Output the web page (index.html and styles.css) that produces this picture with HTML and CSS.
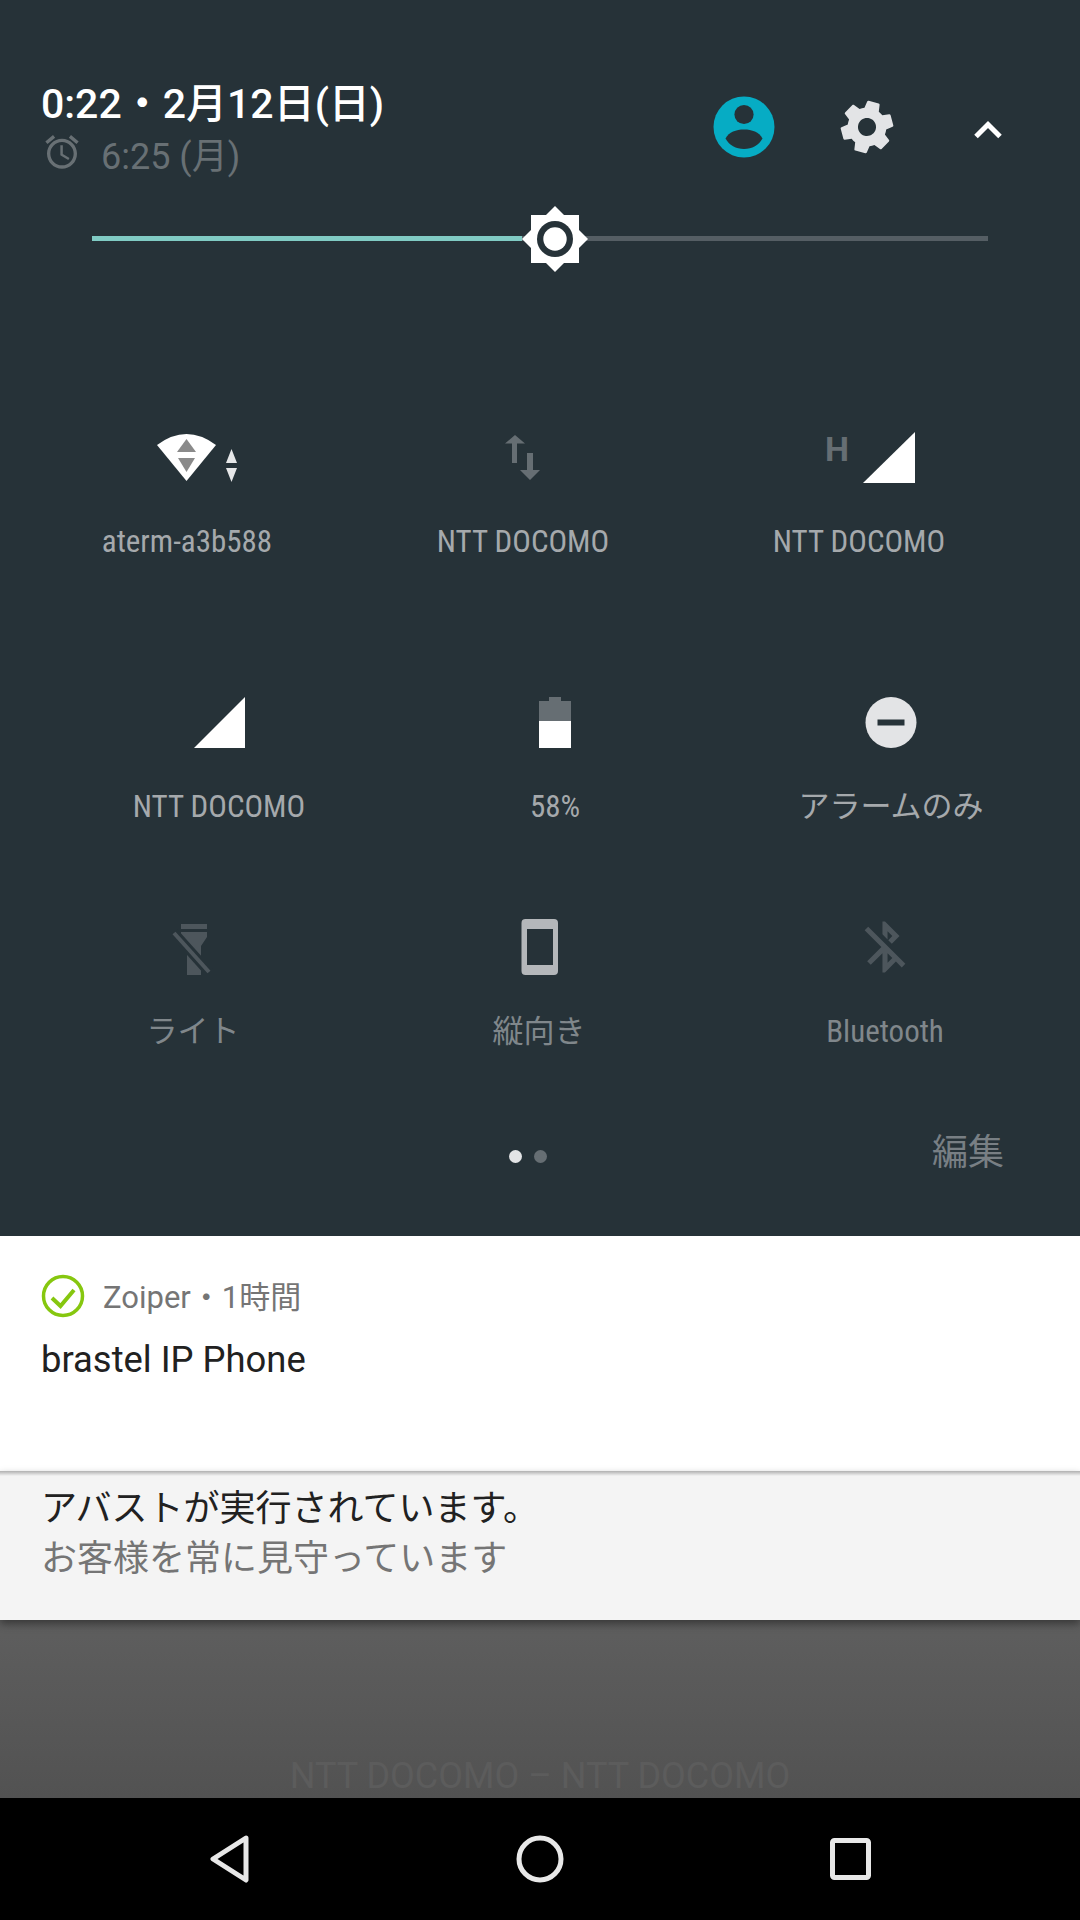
FILE: index.html
```html
<!DOCTYPE html>
<html lang="ja">
<head>
  <meta charset="UTF-8" />
  <title>Quick Settings</title>
  <link rel="stylesheet" href="styles.css">
</head>
<body>
  <section class="panel">
    <!-- Header -->
    <div class="header">
      <div class="clock">
        <div class="date">0:22・2月12日(日)</div>
        <div class="alarm">
          <svg class="alarm-icon" viewBox="0 0 24 24"><path d="M22 5.72l-4.6-3.86-1.29 1.53 4.6 3.86L22 5.72zM7.88 3.39L6.6 1.86 2 5.71l1.29 1.53 4.59-3.85zM12.5 8H11v6l4.75 2.85.75-1.23-4-2.37V8zM12 4c-4.97 0-9 4.03-9 9s4.02 9 9 9c4.97 0 9-4.03 9-9s-4.03-9-9-9zm0 16c-3.87 0-7-3.13-7-7s3.13-7 7-7 7 3.13 7 7-3.13 7-7 7z"/></svg>
          <span>6:25 (月)</span>
        </div>
      </div>
      <div class="header-icons">
        <svg class="user" viewBox="0 0 64 64">
          <circle cx="32" cy="32" r="30.500" fill="#06acc4"/>
          <circle cx="32" cy="19.500" r="9.600" fill="#263238"/>
          <path d="M13.500 43.500C17 37 24 34.500 32 34.500s15 2.500 18.500 9C47 50 40 54 32 54s-15-4-18.500-10.500z" fill="#263238"/>
        </svg>
        <svg class="gear" viewBox="0 0 24 24"><path transform="rotate(15 12 12)" d="M19.43 12.98c.04-.32.07-.64.07-.98s-.03-.66-.07-.98l2.11-1.65c.19-.15.24-.42.12-.64l-2-3.46c-.12-.22-.39-.3-.61-.22l-2.49 1c-.52-.4-1.08-.73-1.69-.98l-.38-2.65C14.46 2.18 14.25 2 14 2h-4c-.25 0-.46.18-.49.42l-.38 2.65c-.61.25-1.17.59-1.69.98l-2.49-1c-.23-.09-.49 0-.61.22l-2 3.46c-.13.22-.07.49.12.64l2.11 1.65c-.04.32-.07.65-.07.98s.03.66.07.98l-2.11 1.65c-.19.15-.24.42-.12.64l2 3.46c.12.22.39.3.61.22l2.49-1c.52.4 1.08.73 1.69.98l.38 2.65c.03.24.24.42.49.42h4c.25 0 .46-.18.49-.42l.38-2.65c.61-.25 1.17-.59 1.69-.98l2.49 1c.23.09.49 0 .61-.22l2-3.46c.12-.22.07-.49-.12-.64l-2.11-1.65zM12 15.5c-1.93 0-3.5-1.57-3.5-3.5s1.57-3.5 3.5-3.5 3.5 1.57 3.5 3.5-1.57 3.5-3.5 3.5z"/></svg>
        <svg class="chevron" viewBox="0 0 36 36"><path d="M6 24.500L18 12.500l12 12" fill="none" stroke="#fff" stroke-width="5"/></svg>
      </div>
    </div>

    <!-- Brightness -->
    <div class="slider">
      <div class="slider-fill"></div>
      <div class="slider-rest"></div>
      <svg class="slider-thumb" viewBox="0 0 70 70">
        <rect x="11" y="11" width="48" height="48" fill="#fff"/>
        <polygon points="35,2 68,35 35,68 2,35" fill="#fff"/>
        <circle cx="35" cy="35" r="18" fill="#263238"/>
        <circle cx="35" cy="35" r="11.700" fill="#fff"/>
      </svg>
    </div>

    <!-- Tiles -->
    <div class="tiles tiles-first">
      <div class="tile">
        <svg class="tile-icon wide" viewBox="0 0 108 56">
          <path d="M53.500 52L24 16Q53.500-6 83 16z" fill="#fff"/>
          <path d="M53.500 10l9.500 13H44z" fill="#8a8a8a"/>
          <path d="M45 29h17l-8.500 14z" fill="#8a8a8a"/>
          <path d="M98.500 20l5.500 14H93zM93 39h11l-5.500 14z" fill="#e6e7e8"/>
        </svg>
        <div class="tile-label">aterm-a3b588</div>
      </div>
      <div class="tile">
        <svg class="tile-icon" viewBox="0 0 56 56"><path d="M20 6l10 8.500h-8V34h-5V14.500H10zM32 24h6v17h7L35 51 25 41h7z" fill="#666e73"/></svg>
        <div class="tile-label">NTT DOCOMO</div>
      </div>
      <div class="tile">
        <svg class="tile-icon wide" viewBox="0 0 112 56">
          <text class="net-type" x="22" y="32">H</text>
          <path d="M60 54h52V3z" fill="#fff"/>
        </svg>
        <div class="tile-label">NTT DOCOMO</div>
      </div>
    </div>

    <div class="tiles tiles-second">
      <div class="tile">
        <svg class="tile-icon" viewBox="0 0 56 56"><path d="M3 54h51V3z" fill="#fff"/></svg>
        <div class="tile-label">NTT DOCOMO</div>
      </div>
      <div class="tile">
        <svg class="tile-icon" viewBox="0 0 56 56">
          <path d="M22 3h12v4h10v20H12V7h10z" fill="#666e73"/>
          <rect x="12" y="27" width="32" height="27" fill="#fff"/>
        </svg>
        <div class="tile-label">58%</div>
      </div>
      <div class="tile">
        <svg class="tile-icon" viewBox="0 0 56 56">
          <circle cx="28" cy="28.500" r="25.500" fill="#e3e4e6"/>
          <rect x="14.500" y="25.500" width="27" height="6" fill="#263238"/>
        </svg>
        <div class="tile-label">アラームのみ</div>
      </div>
    </div>

    <div class="tiles tiles-third">
      <div class="tile off">
        <svg class="tile-icon" viewBox="0 0 56 56">
          <path d="M16 5h26v5H16zM16 13h26v5l-6 9v29H22V27l-6-9z" fill="#4d565c"/>
          <path d="M9 14l35 39" stroke="#263238" stroke-width="10"/>
          <path d="M9 14l35 39" stroke="#4d565c" stroke-width="4"/>
        </svg>
        <div class="tile-label">ライト</div>
      </div>
      <div class="tile off">
        <svg class="tile-icon" viewBox="0 0 56 56"><path fill-rule="evenodd" d="M14.500 0h28.500a4 4 0 0 1 4 4v48a4 4 0 0 1-4 4H14.500a4 4 0 0 1-4-4V4a4 4 0 0 1 4-4zM16 10v36h26V10z" fill="#b4b7ba"/></svg>
        <div class="tile-label">縦向き</div>
      </div>
      <div class="tile off">
        <svg class="tile-icon" viewBox="1 1 22 22"><path d="M13 5.830l1.880 1.880-1.600 1.600 1.410 1.410 3.020-3.020L12 2h-1v5.030l2 2v-3.200zM5.410 4L4 5.410 10.590 12 5 17.590 6.410 19 11 14.410V22h1l4.290-4.290 2.300 2.300L20 18.590 5.410 4zM13 18.170v-3.760l1.880 1.880L13 18.170z" fill="#4d565c"/></svg>
        <div class="tile-label">Bluetooth</div>
      </div>
    </div>

    <div class="panel-footer">
      <div class="dots"><span class="dot on"></span><span class="dot"></span></div>
      <div class="edit">編集</div>
    </div>
  </section>

  <!-- Notifications -->
  <section class="card card-zoiper">
    <div class="card-meta">
      <svg class="check" viewBox="0 0 44 44">
        <circle cx="22" cy="22" r="19.500" fill="none" stroke="#86c70f" stroke-width="3.500"/>
        <path d="M11 24l8.500 8L33 16" fill="none" stroke="#86c70f" stroke-width="4"/>
      </svg>
      <span class="card-app">Zoiper・1時間</span>
    </div>
    <div class="card-title">brastel IP Phone</div>
  </section>
  <section class="card card-avast">
    <div class="avast-title">アバストが実行されています。</div>
    <div class="avast-text">お客様を常に見守っています</div>
  </section>

  <div class="carrier"><span class="carrier-text">NTT DOCOMO – NTT DOCOMO</span></div>

  <nav class="nav">
    <svg viewBox="0 0 60 60"><path d="M46 9L13 30l33 21z" fill="none" stroke="#e8e8e8" stroke-width="5" stroke-linejoin="round"/></svg>
    <svg viewBox="0 0 60 60"><circle cx="30" cy="30" r="21" fill="none" stroke="#e8e8e8" stroke-width="5"/></svg>
    <svg viewBox="0 0 60 60"><rect x="12.500" y="11.500" width="36" height="37" rx="2" fill="none" stroke="#e8e8e8" stroke-width="5"/></svg>
  </nav>
</body>
</html>
```
FILE: styles.css
```css
* {
  box-sizing: border-box; margin: 0; padding: 0;
}
body {
  width: 1080px;
  height: 1920px;
  display: flex;
  flex-direction: column;
  overflow: hidden;
  font-family: Roboto, "Noto Sans CJK JP", sans-serif;
  background: #000;
}
.panel {
  height: 1236px;
  background: #263238;
}
.header {
  display: flex;
  justify-content: space-between;
  height: 178px;
  padding: 76px 74px 0 41px;
}
.date {
  font-size: 41px;
  font-weight: 500;
  line-height: 56px;
  color: #fff;
}
.alarm {
  display: flex;
  align-items: center;
  gap: 19px;
  margin-top: 3px;
  font-size: 36px;
  line-height: 44px;
  color: #687074;
}
.alarm-icon {
  width: 40px;
  height: 40px;
  fill: #687074;
  margin: -11px 0 0 1px;
}
.header-icons {
  display: flex;
  align-items: center;
  gap: 60px;
  height: 64px;
  margin-top: 19px;
}
.user {
  width: 64px;
  height: 64px;
}
.gear {
  width: 62px;
  height: 62px;
  fill: #e3e4e6;
}
.chevron {
  width: 36px;
  height: 36px;
  margin: 6px 0 0 12px;
}
.slider {
  position: relative;
  display: flex;
  height: 5px;
  margin: 58px 92px 0;
}
.slider-fill {
  width: 430px;
  background: #80cbc4;
}
.slider-rest {
  flex: 1;
  background: #555e64;
}
.slider-thumb {
  position: absolute;
  left: 428px;
  top: -32px;
  width: 70px;
  height: 70px;
}
.tiles {
  display: grid;
  grid-template-columns: repeat(3, 336px);
}
.tiles-first {
  margin-top: 188px;
  padding-left: 19px;
}
.tiles-second {
  margin-top: 132px;
  padding-left: 51px;
}
.tiles-third {
  margin-top: 92px;
  padding-left: 20px;
  grid-template-columns: repeat(3, 346px);
}
.tile {
  display: flex;
  flex-direction: column;
  align-items: center;
}
.tile-icon {
  width: 56px;
  height: 56px;
}
.tile-icon.wide {
  width: 108px;
}
.tiles-first .tile:last-child .tile-icon {
  width: 112px;
}
.tile-label {
  margin-top: 37px;
  font-size: 31px;
  line-height: 40px;
  font-stretch: 75%;
  color: #a5a9ac;
  white-space: nowrap;
}
.tile.off .tile-label {
  color: #80878b;
}
.net-type {
  font-family: Roboto, sans-serif;
  font-size: 34px;
  font-weight: 700;
  fill: #666e73;
}
.panel-footer {
  display: flex;
  align-items: center;
  height: 120px;
  margin-top: 79px;
  padding: 0 76px 80px 509px;
}
.dots {
  display: flex;
  gap: 12px;
  margin-top: 10px;
}
.dot {
  width: 13px;
  height: 13px;
  border-radius: 50%;
  background: #666e73;
}
.dot.on {
  background: #e3e4e6;
}
.edit {
  margin: 4px 0 0 auto;
  font-size: 36px;
  line-height: 40px;
  color: #787f84;
}
.card-zoiper {
  height: 235px;
  padding: 38px 41px 0;
  background: #fff;
}
.card-meta {
  display: flex;
  align-items: center;
  gap: 18px;
  height: 44px;
  font-size: 31px;
  color: #757575;
}
.check {
  width: 44px;
  height: 44px;
}
.card-app {
  margin-top: -4px;
}
.card-title {
  margin-top: 18px;
  font-size: 36.4px;
  line-height: 48px;
  color: #212121;
}
.card-avast {
  position: relative;
  height: 149px;
  padding: 14px 41px 0;
  background: linear-gradient(rgba(0,0,0,0.28), rgba(0,0,0,0) 5px), #f4f4f4;
  box-shadow: 0 4px 8px rgba(0,0,0,0.4);
  font-size: 36px;
  line-height: 48px;
}
.avast-title {
  color: #212121;
}
.avast-text {
  margin-top: 2px;
  color: #757575;
}
.carrier {
  flex: 1;
  display: flex;
  justify-content: center;
  align-items: flex-end;
  background: linear-gradient(#5e5e5e, #525252);
}
.carrier-text {
  margin-bottom: -2px;
  font-size: 36px;
  line-height: 48px;
  color: #5c5c5c;
}
.nav {
  position: relative;
  display: grid;
  grid-template-columns: repeat(3, 310px);
  justify-content: center;
  justify-items: center;
  align-items: center;
  height: 122px;
  background: #000;
}
.nav svg {
  width: 60px;
  height: 60px;
}
```
